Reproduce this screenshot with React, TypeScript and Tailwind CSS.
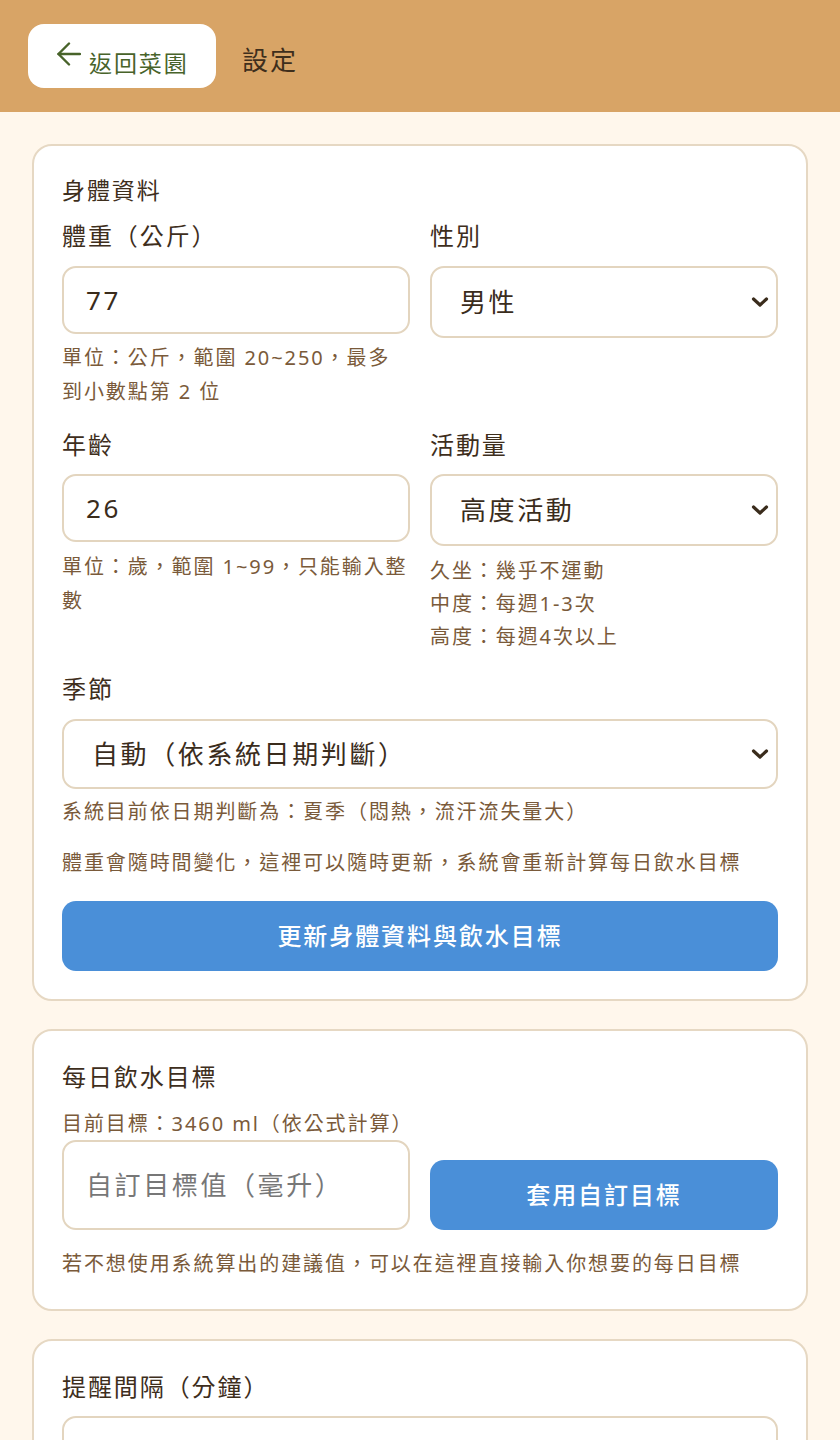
import React from "react";

const font = { fontFamily: '"Noto Sans", "Noto Sans CJK TC", sans-serif' };

function Chevron() {
  return (
    <svg width="18" height="12" viewBox="0 0 18 12" className="pointer-events-none absolute right-[9px] top-1/2 -translate-y-1/2">
      <path d="M2.5 3 L9 9 L15.5 3" fill="none" stroke="#3a2c1c" strokeWidth="3.2" strokeLinecap="round" strokeLinejoin="round" />
    </svg>
  );
}

function Select({ value, h }: { value: string; h: string }) {
  return (
    <div className="relative">
      <select
        defaultValue={value}
        className={`block w-full appearance-none rounded-[14px] border-2 border-[#e3d5bf] bg-white pl-[28px] text-[26px] tracking-[0.1em] text-[#3a2c1c] outline-none ${h}`}
        style={font}
      >
        <option>{value}</option>
      </select>
      <Chevron />
    </div>
  );
}

function Input({ value, placeholder, h }: { value?: string; placeholder?: string; h: string }) {
  return (
    <input
      defaultValue={value}
      placeholder={placeholder}
      className={`block w-full rounded-[14px] border-2 border-[#e3d5bf] bg-white pl-[22px] text-[26px] tracking-[0.1em] text-[#3a2c1c] outline-none placeholder:text-[#777777] ${h}`}
      style={font}
    />
  );
}

export default function App() {
  return (
    <div className="min-h-[1440px] bg-[#fff7ec] tracking-[0.12em]" style={font}>
      <header className="flex h-[112px] items-start bg-[#d8a466] pl-[28px] pt-[24px]">
        <button className="flex h-[64px] w-[188px] items-start rounded-[16px] bg-white pl-[29px]">
          <svg width="24" height="24" viewBox="0 0 24 24" className="mt-[18px] shrink-0" fill="none" stroke="#48632a" strokeWidth="2.4" strokeLinecap="round" strokeLinejoin="round">
            <path d="M23 12H1.5" />
            <path d="M12 1.5L1.5 12L12 22.5" />
          </svg>
          <span className="ml-[8px] mt-[24px] whitespace-nowrap text-[23px] leading-[30px] text-[#48632a]">返回菜園</span>
        </button>
        <h1 className="ml-[26px] mt-[18px] text-[26px] leading-[36px] text-[#3e2e1c]">設定</h1>
      </header>

      <main className="flex flex-col gap-[28px] px-[32px] pt-[32px]">
        {/* Card 1 */}
        <section className="rounded-[20px] border-2 border-[#e6d8c3] bg-white px-[28px] pt-[28px] pb-[28px]">
          <h2 className="text-[23px] leading-[32px] text-[#3e2e1c]">身體資料</h2>
          <div className="mt-[12px] grid grid-cols-2 gap-x-[20px] gap-y-[18px]">
            <div>
              <div className="text-[24px] leading-[36px] text-[#3e2e1c]">體重（公斤）</div>
              <div className="mt-[12px]"><Input value="77" h="h-[68px]" /></div>
              <p className="mt-[7px] text-[20px] leading-[34px] text-[#7a5a3a]">單位：公斤，範圍 20~250，最多到小數點第 2 位</p>
            </div>
            <div>
              <div className="text-[24px] leading-[36px] text-[#3e2e1c]">性別</div>
              <div className="mt-[12px]"><Select value="男性" h="h-[72px]" /></div>
            </div>
            <div>
              <div className="text-[24px] leading-[36px] text-[#3e2e1c]">年齡</div>
              <div className="mt-[11px]"><Input value="26" h="h-[68px]" /></div>
              <p className="mt-[8px] text-[20px] leading-[34px] text-[#7a5a3a]">單位：歲，範圍 1~99，只能輸入整數</p>
            </div>
            <div>
              <div className="text-[24px] leading-[36px] text-[#3e2e1c]">活動量</div>
              <div className="mt-[11px]"><Select value="高度活動" h="h-[72px]" /></div>
              <div className="mt-[8px] text-[20px] leading-[33px] text-[#7a5a3a]">
                <p>久坐：幾乎不運動</p>
                <p>中度：每週1-3次</p>
                <p>高度：每週4次以上</p>
              </div>
            </div>
          </div>
          <div className="mt-[18px] text-[24px] leading-[36px] text-[#3e2e1c]">季節</div>
          <div className="mt-[12px]"><Select value="自動（依系統日期判斷）" h="h-[70px]" /></div>
          <p className="mt-[6px] text-[20px] leading-[34px] text-[#7a5a3a]">系統目前依日期判斷為：夏季（悶熱，流汗流失量大）</p>
          <p className="mt-[17px] text-[20px] leading-[34px] text-[#7a5a3a]">體重會隨時間變化，這裡可以隨時更新，系統會重新計算每日飲水目標</p>
          <button className="mt-[21px] h-[70px] w-full rounded-[14px] bg-[#4a8fd8] text-[24px] font-medium text-white">
            更新身體資料與飲水目標
          </button>
        </section>

        {/* Card 2 */}
        <section className="rounded-[20px] border-2 border-[#e6d8c3] bg-white px-[28px] pt-[28px] pb-[28px]">
          <h2 className="text-[24px] leading-[36px] text-[#3e2e1c]">每日飲水目標</h2>
          <p className="mt-[14px] text-[20px] leading-[30px] text-[#7a5a3a]">目前目標：3460 ml（依公式計算）</p>
          <div className="mt-[1px] grid grid-cols-2 items-end gap-x-[20px]">
            <Input placeholder="自訂目標值（毫升）" h="h-[90px]" />
            <button className="h-[70px] w-full rounded-[14px] bg-[#4a8fd8] text-[24px] font-medium text-white">套用自訂目標</button>
          </div>
          <p className="mt-[17px] text-[20px] leading-[34px] text-[#7a5a3a]">若不想使用系統算出的建議值，可以在這裡直接輸入你想要的每日目標</p>
        </section>

        {/* Card 3 */}
        <section className="rounded-[20px] border-2 border-[#e6d8c3] bg-white px-[28px] pt-[28px] pb-[28px]">
          <h2 className="text-[24px] leading-[36px] text-[#3e2e1c]">提醒間隔（分鐘）</h2>
          <div className="mt-[11px]"><Input value="" h="h-[68px]" /></div>
        </section>
      </main>
    </div>
  );
}
